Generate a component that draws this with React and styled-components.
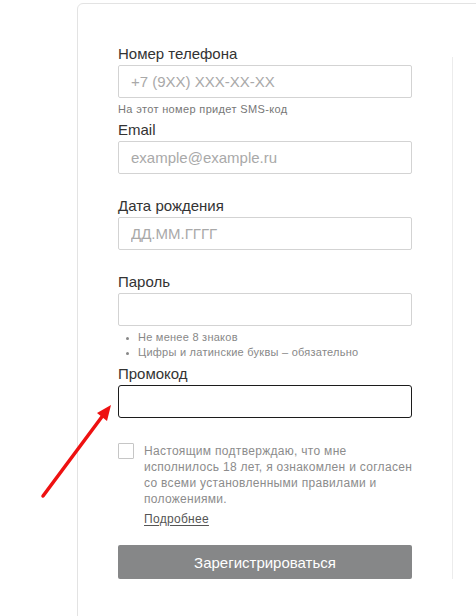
import styled, { createGlobalStyle } from "styled-components";

const GlobalStyle = createGlobalStyle`
    html, body {
        margin: 0;
        padding: 0;
        background: #ffffff;
        overflow: hidden;
    }
    body {
        font-family: "Liberation Sans", Arial, sans-serif;
        color: #333333;
    }
`

const Page = styled.div`
    position: relative;
    width: 476px;
    height: 616px;
    overflow: hidden;
    padding: 3px 0 0 77px;
    box-sizing: border-box;
`

const Card = styled.div`
    width: 520px;
    border: 1px solid #e3e3e3;
    border-radius: 6px;
    padding-bottom: 120px;
    background: #ffffff;
`

const Row = styled.div`
    display: flex;
    align-items: stretch;
`

const Form = styled.form`
    width: 294px;
    padding: 41px 40px 0 40px;
    display: flex;
    flex-direction: column;
`

const Divider = styled.div`
    width: 1px;
    margin-top: 53px;
    background: #ececec;
`

const Label = styled.label`
    display: block;
    font-size: 15px;
    line-height: 18px;
    color: #333333;
    margin-bottom: 2px;
`

const Input = styled.input`
    display: block;
    width: 100%;
    height: 33px;
    box-sizing: border-box;
    padding: 0 12px;
    border: 1px solid ${(p) => (p.$active ? "#1c1c1c" : "#d3d3d3")};
    border-radius: ${(p) => (p.$active ? "3px" : "2px")};
    background: #ffffff;
    font-family: "Liberation Sans", Arial, sans-serif;
    font-size: 15px;
    color: #333333;
    outline: none;

    &::placeholder {
        color: #a9a9a9;
    }
`

const Hint = styled.div`
    min-height: 14px;
    margin: 4px 0 5px;
    font-size: 11px;
    line-height: 14px;
    letter-spacing: 0.35px;
    color: #777777;
`

const Rules = styled.ul`
    margin: 4px 0 6px;
    padding: 0 0 0 20px;
    font-size: 11px;
    line-height: 14.5px;
    letter-spacing: 0.25px;
    color: #888888;

    li::marker {
        font-size: 9px;
    }
`

const Agree = styled.div`
    display: flex;
    align-items: flex-start;
    gap: 10px;
    margin-top: 25px;
`

const Box = styled.span`
    flex: none;
    width: 16px;
    height: 16px;
    box-sizing: border-box;
    border: 1px solid #c6c6c6;
    border-radius: 1px;
    background: #ffffff;
`

const AgreeBody = styled.div`
    flex: 1;
    margin-right: -6px;
`

const AgreeText = styled.p`
    margin: 0;
    font-size: 12px;
    line-height: 16px;
    letter-spacing: 0.3px;
    color: #8c8c8c;
`

const More = styled.a`
    display: inline-block;
    margin-top: 3.5px;
    font-size: 12px;
    line-height: 16px;
    letter-spacing: 0.3px;
    color: #555555;
    text-decoration: underline;
    text-underline-offset: 2px;
`

const Submit = styled.button`
    margin-top: 18.5px;
    height: 34px;
    width: 100%;
    border: none;
    border-radius: 2px;
    background: #868788;
    color: #ffffff;
    font-family: "Liberation Sans", Arial, sans-serif;
    font-size: 15px;
`

const Arrow = styled.svg`
    position: absolute;
    left: 0;
    top: 0;
    pointer-events: none;
`

const Field = ({ label, placeholder, hint, active }) => (
    <div>
        <Label>{label}</Label>
        <Input placeholder={placeholder} $active={active} />
        {hint !== undefined && <Hint>{hint}</Hint>}
    </div>
)

const App = () => {
    return (
        <>
            <GlobalStyle />
            <Page>
                <Card>
                    <Row>
                        <Form onSubmit={(e) => e.preventDefault()}>
                            <Field label="Номер телефона" placeholder="+7 (9XX) XXX-XX-XX" hint="На этот номер придет SMS-код" />
                            <Field label="Email" placeholder="example@example.ru" hint="" />
                            <Field label="Дата рождения" placeholder="ДД.ММ.ГГГГ" hint="" />
                            <Field label="Пароль" />
                            <Rules>
                                <li>Не менее 8 знаков</li>
                                <li>Цифры и латинские буквы – обязательно</li>
                            </Rules>
                            <Field label="Промокод" active />
                            <Agree>
                                <Box />
                                <AgreeBody>
                                    <AgreeText>
                                        Настоящим подтверждаю, что мне исполнилось 18 лет, я ознакомлен и согласен со всеми установленными правилами и положениями.
                                    </AgreeText>
                                    <More href="#">Подробнее</More>
                                </AgreeBody>
                            </Agree>
                            <Submit type="submit">Зарегистрироваться</Submit>
                        </Form>
                        <Divider />
                    </Row>
                </Card>
                <Arrow width="476" height="616" viewBox="0 0 476 616">
                    <line x1="43" y1="496" x2="104" y2="414" stroke="#ee1111" strokeWidth="3.5" strokeLinecap="round" />
                    <polygon points="111,405 107,421 97,413" fill="#ee1111" />
                </Arrow>
            </Page>
        </>
    );
}

export default App;
